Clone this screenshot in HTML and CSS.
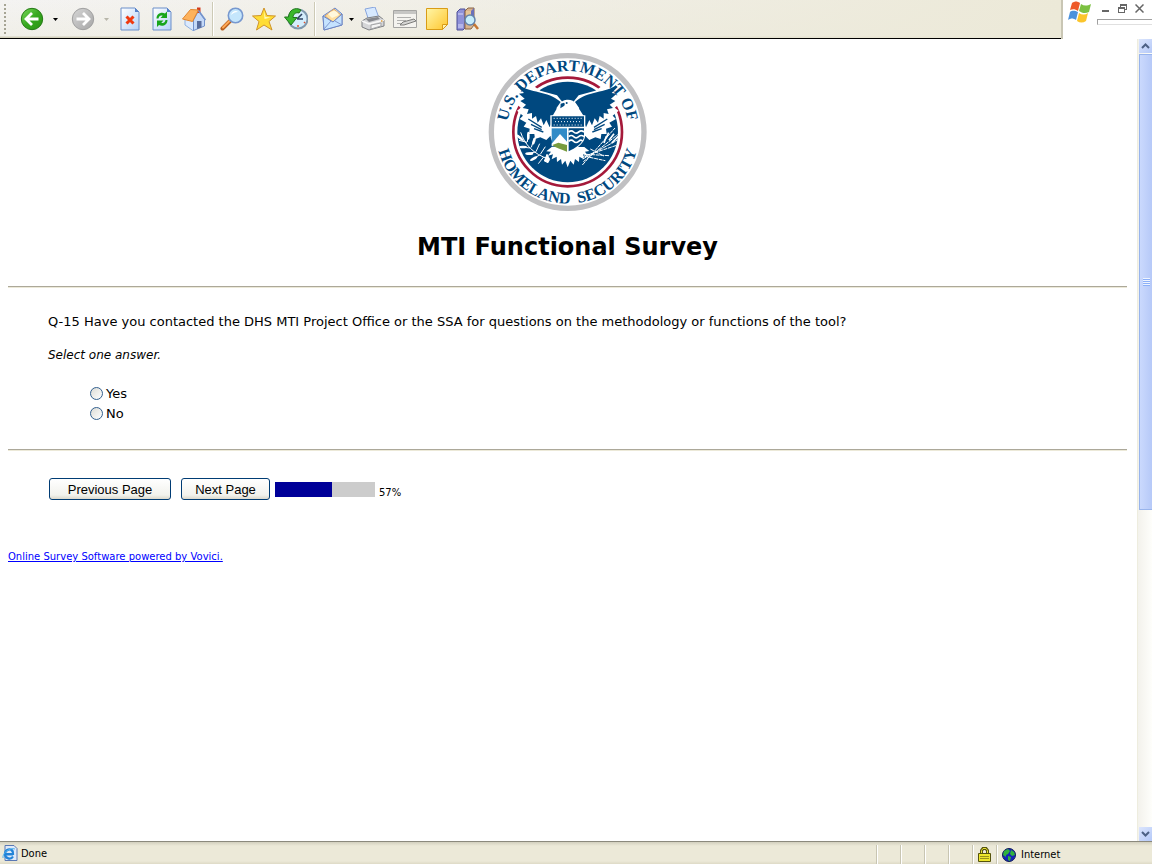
FILE: index.html
```html
<!DOCTYPE html>
<html lang="en">
<head>
  <meta charset="UTF-8">
  <meta name="viewport" content="width=device-width, initial-scale=1.0">
  <title>MTI Functional Survey</title>
  <link rel="stylesheet" href="styles.css">
</head>
<body>
  <header class="top">
    <div class="toolbar">
      <span class="grip"></span>
      <button class="tool" aria-label="Back">
        <svg width="24" height="24" viewBox="0 0 24 24">
          <defs>
            <linearGradient id="green" x1="0" y1="0" x2="1" y2="1"><stop offset="0" stop-color="#7ddb5e"/><stop offset=".5" stop-color="#36a81f"/><stop offset="1" stop-color="#2b9413"/></linearGradient>
            <linearGradient id="grey" x1="0" y1="0" x2="1" y2="1"><stop offset="0" stop-color="#d6d6d6"/><stop offset="1" stop-color="#a6a6a6"/></linearGradient>
            <linearGradient id="paper" x1="0" y1="0" x2="1" y2="1"><stop offset="0" stop-color="#ffffff"/><stop offset="1" stop-color="#b5d2f8"/></linearGradient>
            <linearGradient id="gold" x1="0" y1="0" x2="1" y2="1"><stop offset="0" stop-color="#fff6a8"/><stop offset="1" stop-color="#ffc62e"/></linearGradient>
          </defs>
          <circle cx="12" cy="12" r="10.7" fill="url(#green)" stroke="#267a17"/>
          <path d="M18.500 12H7M12 6l-6 6 6 6" fill="none" stroke="#fff" stroke-width="2.800"/>
        </svg>
      </button>
      <button class="drop" aria-label="Back history"><svg width="5" height="3" viewBox="0 0 5 3"><path d="M0 0h5L2.500 3z"/></svg></button>
      <button class="tool forward" aria-label="Forward">
        <svg width="24" height="24" viewBox="0 0 24 24">
          <circle cx="12" cy="12" r="10.700" fill="url(#grey)" stroke="#a0a0a0"/>
          <path d="M5.500 12H17M12 6l6 6-6 6" fill="none" stroke="#fff" stroke-width="2.800"/>
        </svg>
      </button>
      <button class="drop" aria-label="Forward history"><svg width="5" height="3" viewBox="0 0 5 3"><path d="M0 0h5L2.500 3z" fill="#b8b6aa"/></svg></button>
      <button class="tool" aria-label="Stop">
        <svg width="24" height="24" viewBox="0 0 24 24">
          <path d="M3 1h14l4 4v18H3z" fill="url(#paper)" stroke="#6c8fc9"/>
          <path d="M17 1v4h4z" fill="#5580c8"/>
          <path d="M8.500 9.500l7 7M15.500 9.500l-7 7" stroke="#f03a10" stroke-width="3"/>
        </svg>
      </button>
      <button class="tool" aria-label="Refresh">
        <svg width="24" height="24" viewBox="0 0 24 24">
          <path d="M3 1h14l4 4v18H3z" fill="url(#paper)" stroke="#6c8fc9"/>
          <path d="M17 1v4h4z" fill="#5580c8"/>
          <path d="M6.500 11.500c0-5 5-7 8.500-5l2-2v6.500h-6.500l2.200-2.200c-2-1-3.700.2-4.200 2.700zM17.500 13c0 5-5 7-8.500 5l-2 2v-6.500h6.500l-2.200 2.200c2 1 3.700-.2 4.200-2.700z" fill="#18a51b"/>
        </svg>
      </button>
      <button class="tool" aria-label="Home">
        <svg width="24" height="24" viewBox="0 0 24 24">
          <path d="M3 12v6l8.500 6V13z" fill="#dceafd" stroke="#8fb0e0"/>
          <path d="M11.500 23.500V13L16.500 4l6 8.500V19z" fill="#c4d9f8" stroke="#7292cc"/>
          <path d="M15 14h4.500v6.500L15 22z" fill="#586d9d"/>
          <path d="M15 .500h3.500V6H15z" fill="#d33a1c"/>
          <path d="M.500 12L8.500 2.500l8 .5-6 11.500z" fill="#fdb25c" stroke="#e08630"/>
          <path d="M16.500 3.500l7 9.500" stroke="#7292cc" stroke-width="1.500"/>
        </svg>
      </button>
      <span class="divider"></span>
      <button class="tool" aria-label="Search">
        <svg width="24" height="24" viewBox="0 0 24 24">
          <path d="M10 14l-7.500 7.500" stroke="#b85e1c" stroke-width="4" stroke-linecap="round"/>
          <path d="M9.500 14L3 20.500" stroke="#ffa955" stroke-width="2" stroke-linecap="round"/>
          <circle cx="15.500" cy="8.500" r="7.200" fill="#c5e6fc" stroke="#7798cf" stroke-width="1.600"/>
          <path d="M11 8c1-4 5-5 7-3-3 0-5 1-7 3z" fill="#fff"/>
        </svg>
      </button>
      <button class="tool" aria-label="Favorites">
        <svg width="24" height="24" viewBox="0 0 24 24">
          <path d="M12 1l3 7.500 8.500.5-6.500 5.500 3 8.500-8-5-7.500 5L7 14.500.500 9 9 8.500z" fill="#ffdd35" stroke="#cf942a" stroke-linejoin="round"/>
          <path d="M12 4l1.500 6 5 .5-6 1.500z" fill="#fffac0"/>
        </svg>
      </button>
      <button class="tool" aria-label="History">
        <svg width="24" height="24" viewBox="0 0 24 24">
          <circle cx="14" cy="12" r="9.500" fill="#d4edfc" stroke="#7f98ad" stroke-width="2"/>
          <path d="M13 12l5-5M13 12h6" stroke="#304463" stroke-width="1.600"/>
          <path d="M14 4v2M14 18v2M20 15l1 1" stroke="#e3532a" stroke-width="1.500"/>
          <path d="M17 3C11-.500 5 3 4.500 10H.500L7 18l6-7.500H9C9 7 12 5 15 6z" fill="#39b72c" stroke="#20751d"/>
        </svg>
      </button>
      <span class="divider"></span>
      <button class="tool mail" aria-label="Mail">
        <svg width="24" height="24" viewBox="0 0 24 24">
          <path d="M2 9L14 1l7 6v11L3 23z" fill="#bcdcfb" stroke="#6c85c3"/>
          <path d="M4 9l9-7 7 6-8 7z" fill="#ffe0a0" stroke="#e0a768"/>
          <path d="M7 7c3-3 6-4 9-2l2 3-7 3z" fill="#fff8dc"/>
          <path d="M2 9l10 6 9-8v11L3 23z" fill="#c5e3ff" stroke="#6c85c3"/>
          <path d="M3 22l7-8M21 18l-7-4" stroke="#8299cf" fill="none"/>
        </svg>
      </button>
      <button class="drop small" aria-label="Mail menu"><svg width="5" height="3" viewBox="0 0 5 3"><path d="M0 0h5L2.500 3z"/></svg></button>
      <button class="tool" aria-label="Print">
        <svg width="24" height="24" viewBox="0 0 24 24">
          <path d="M4 2l10-2 4 11-10 3z" fill="#d7e9ff" stroke="#88a5dd"/>
          <path d="M1 14l5-3 12-2 5 4v6L8 23l-7-3z" fill="#d5d6d8" stroke="#7e8084"/>
          <path d="M1 14l7 3 15-4" fill="none" stroke="#f8f8f8" stroke-width="1.500"/>
          <path d="M5 12l12-2 2 2-11 3z" fill="#85878d"/>
          <path d="M10 18l10-2v3l-10 3z" fill="#f4f4f4" stroke="#a3a4a6"/>
          <path d="M20 14h1.500" stroke="#e09b35" stroke-width="1.500"/>
        </svg>
      </button>
      <button class="tool" aria-label="Edit">
        <svg width="24" height="24" viewBox="0 0 24 24">
          <path d="M.500 3.500h23v17H.500z" fill="#f4f3ef" stroke="#a5a5a3"/>
          <path d="M1 4h22v3H1z" fill="#c6c6c4"/>
          <path d="M4 10.500h14M4 13.500h9M4 16.500h4" stroke="#b0b0ae"/>
          <path d="M7 18l3-3 11-3 2 2-12 4z" fill="#d6d6d4" stroke="#7c7c7a"/>
        </svg>
      </button>
      <button class="tool" aria-label="Note">
        <svg width="24" height="24" viewBox="0 0 24 24">
          <path d="M1.500 1.500h21v16l-5 5h-16z" fill="url(#gold)" stroke="#d99c16"/>
          <path d="M22.500 17.500h-5v5z" fill="#fff1b0" stroke="#d99c16"/>
        </svg>
      </button>
      <button class="tool research" aria-label="Research">
        <svg width="24" height="24" viewBox="0 0 24 24">
          <path d="M1 5l3-3h5v19l-2 2H1z" fill="#8f91d8" stroke="#4d4e96"/>
          <path d="M2 7h5M2 18h5M2 20h5" stroke="#d8d9fa"/>
          <path d="M9 4l3-3h6v17l-3 4H9z" fill="#d9b38c" stroke="#8a6544"/>
          <path d="M10 5h5M10 7h5" stroke="#f2d79c"/>
          <path d="M15 4l3-3v16h-3z" fill="#6b70ba"/>
          <path d="M18 17l4 5" stroke="#c57632" stroke-width="2.500"/>
          <circle cx="14" cy="13" r="5" fill="#c6edfb" stroke="#6483aa" stroke-width="1.500"/>
        </svg>
      </button>
    </div>
    <div class="window-corner">
      <svg class="flag" width="24" height="24" viewBox="0 0 24 24">
        <path d="M4 3c3-2 5-2 8 0l-2 8c-3-2-5-2-8-1z" fill="#ee5a2a"/>
        <path d="M13 4c3 2 6 2 10 0l-2 8c-4 2-7 1-10-1z" fill="#7cc142"/>
        <path d="M2 12c3-2 5-1 8 0l-2 8c-3-2-5-2-8 0z" fill="#4b91dc"/>
        <path d="M11 13c3 2 6 2 9 0l-2 8c-3 2-6 2-9 0z" fill="#fbc52c"/>
      </svg>
      <div class="window-side">
        <div class="window-buttons">
          <button aria-label="Minimize"><svg width="9" height="9" viewBox="0 0 9 9"><path d="M1 6h7v2H1z"/></svg></button>
          <button aria-label="Restore"><svg width="9" height="9" viewBox="0 0 9 9"><path d="M2 0h7v6H7V5h1V2H3v1H2zM0 3h7v6H0zM1 5v3h5V5z" fill-rule="evenodd"/></svg></button>
          <button aria-label="Close"><svg width="9" height="9" viewBox="0 0 9 9"><path d="M.500.500l8 8M8.500.500l-8 8" stroke="#666" stroke-width="1.500"/></svg></button>
        </div>
        <div class="clipped-field"></div>
      </div>
    </div>
  </header>

  <div class="view">
    <main class="page">
      <svg class="seal" width="160" height="160" viewBox="23 21 480 480" role="img" aria-label="U.S. Department of Homeland Security seal">
        <defs>
          <path id="arc-top" d="M79 261a183 183 0 0 1 366 0"/>
          <path id="arc-bottom" d="M46 221A216 216 0 1 0 478 221" transform="translate(0 40)"/>
          <path id="arc-low" d="M47 261a215 215 0 0 0 430 0"/>
        </defs>
        <circle cx="262" cy="261" r="229" fill="#fff" stroke="#c0c0c2" stroke-width="16"/>
        <circle cx="262" cy="261" r="163" fill="none" stroke="#a5193a" stroke-width="8"/>
        <circle cx="262" cy="261" r="151" fill="#00487f"/>
        <!-- wings -->
        <g id="wing">
          <path d="M108 112l48 8 24 17 50 14 28 35-16 88-32-1-12 12-18-8-16 5-2-15-16 0 2-16-18-6 8-12-20-11 10-10-18-15 12-9-20-15 13-7-15-18 17-1z" fill="#fff"/>
          <path d="M119 121c28 24 83 15 122 50l-13 19 14 14-20 12-14 31-10-22-8 16-8-21-10 13-5-20-12 8 0-17-15 3 5-14-18-4 10-10-17-11 13-7-17-15 15-2-18-18z" fill="#00487f"/>
          <path d="M152 238l32 16M144 222l40 25M161 251l28 10" stroke="#00487f" stroke-width="4"/>
        </g>
        <use href="#wing" transform="matrix(-1 0 0 1 525 0)"/>
        <!-- body, tail and talons -->
        <path d="M230 190l11-14c4-14 37-18 46 2l12 18 13 20-96-2z" fill="#fff"/>
        <path d="M241 176l-1 14 11-7c3-3 3-8 0-10z" fill="#00487f"/>
        <circle cx="259" cy="174" r="3" fill="#00487f"/>
        <path d="M214 306l-16 13 14 1-10 13 16-5-4 15 15-8 1 16 12-9 3 17 10-12 7 20 8-20 10 12 4-17 12 9 1-16 14 8-3-15 15 5-9-13 13-2-15-12z" fill="#fff"/>
        <path d="M210 211h105v56c0 31-29 43-53 60-24-17-52-29-52-60z" fill="#fff"/>
        <path d="M214 214h97v31h-97z" fill="#00487f"/>
        <path d="M220 220h88M224 230h80M220 240h88" stroke="#fff" stroke-width="3" stroke-dasharray="3 6"/>
        <path d="M214 250h46v50h-46z" fill="#318bc7"/>
        <path d="M214 296l25-29 21 23v14h-46z" fill="#fff"/>
        <path d="M216 300l18-7 26 7v20c-18-7-34-11-44-20z" fill="#779b3e"/>
        <path d="M265 250h46v20c0 27-28 39-46 49z" fill="#00487f"/>
        <path d="M265 261q8-7 15 0t15 0 16 0M265 275q8-7 15 0t15 0 16 0M265 289q8-7 15 0t15 0 12 0" fill="none" stroke="#fff" stroke-width="5"/>
        <!-- olive branch -->
        <g stroke="#fff" stroke-width="3" fill="#fff">
          <path d="M121 262c12 36 38 66 85 80M140 292l-24-6M151 309l-31-3M166 321l-30 5M178 330l-23 13M190 336l-16 20M141 291l3-25M153 307l9-28M167 320l11-24M180 328l15-23" fill="none"/>
          <path d="M203 353l-11-5 8-20 8 15z"/>
        </g>
        <g fill="#fff">
          <ellipse cx="119" cy="278" rx="4" ry="14" transform="rotate(-50 119 278)"/>
          <ellipse cx="144" cy="272" rx="4" ry="12"/>
          <ellipse cx="128" cy="306" rx="12" ry="4"/>
          <ellipse cx="161" cy="288" rx="4" ry="12" transform="rotate(17 161 288)"/>
          <ellipse cx="147" cy="326" rx="12" ry="4"/>
          <ellipse cx="160" cy="341" rx="12" ry="4" transform="rotate(-30 160 341)"/>
        </g>
        <!-- arrows -->
        <path d="M306 360l98-111M309 350l103-81M307 342l105-57M303 336l106-35M314 334l61 13M318 328l68 4M330 312l40 21" stroke="#fff" stroke-width="3" stroke-dasharray="12 2"/>
        <path d="M377 280l8-17M386 286l15-20M394 294l20-20M371 294l7-20" stroke="#fff" stroke-width="5"/>
        <g class="seal-text">
          <text><textPath href="#arc-top" startOffset="50%">U.S. DEPARTMENT OF</textPath></text>
          <text><textPath href="#arc-low" startOffset="50%">HOMELAND&nbsp; SECURITY</textPath></text>
        </g>
      </svg>
      <h1>MTI Functional Survey</h1>
      <hr>
      <form class="survey">
        <fieldset>
          <legend>Q-15 Have you contacted the DHS MTI Project Office or the SSA for questions on the methodology or functions of the tool?</legend>
          <p class="hint">Select one answer.</p>
          <div class="answers">
            <label><input type="radio" name="q15" value="yes">Yes</label>
            <label><input type="radio" name="q15" value="no">No</label>
          </div>
        </fieldset>
        <hr>
        <div class="actions">
          <button type="button" class="previous">Previous Page</button>
          <button type="button" class="next">Next Page</button>
          <div class="progress"><div class="progress-fill" style="width: 57%"></div></div>
          <span class="percent">57%</span>
        </div>
      </form>
      <a class="powered" href="#">Online Survey Software powered by Vovici.</a>
    </main>
    <div class="scrollbar">
      <button aria-label="Scroll up"><svg width="9" height="6" viewBox="0 0 9 6"><path d="M1 5l3.500-3.500L8 5" fill="none" stroke="#4d6185" stroke-width="2"/></svg></button>
      <div class="track">
        <div class="thumb"><span class="thumb-grip"></span></div>
      </div>
      <button aria-label="Scroll down"><svg width="9" height="6" viewBox="0 0 9 6"><path d="M1 1l3.500 3.500L8 1" fill="none" stroke="#4d6185" stroke-width="2"/></svg></button>
    </div>
  </div>

  <footer class="status">
    <div class="status-text">
      <svg width="16" height="16" viewBox="0 0 16 16">
        <path d="M3 .500h9l3 3v12H3z" fill="#dfe9f8" stroke="#5a78b4"/>
        <path d="M11 9.500H4M10.500 6.500C9 3 3 4 3 9s6 6 8 2.500M4 9h7c0-2 0-3-1-4" fill="none" stroke="#2183d8" stroke-width="2.200"/>
        <path d="M1 13C0 8 8 2 13 4" fill="none" stroke="#54b4ee"/>
      </svg>
      <span>Done</span>
    </div>
    <div class="cell"></div>
    <div class="cell"></div>
    <div class="cell"></div>
    <div class="cell"></div>
    <div class="cell lock">
      <svg width="13" height="15" viewBox="0 0 13 15">
        <path d="M3.500 7V3.500l1.500-2h3l1.500 2V7" fill="none" stroke="#55520c" stroke-width="3"/>
        <path d="M3.500 7V3.500l1.500-2h3l1.500 2V7" fill="none" stroke="#e8e23a"/>
        <path d="M.500 6.500h12v8H.500z" fill="#ede62c" stroke="#55520c"/>
        <path d="M2 9.500h9M2 11.500h9" stroke="#99921a"/>
      </svg>
    </div>
    <div class="cell zone">
      <svg width="14" height="14" viewBox="0 0 14 14">
        <circle cx="7" cy="7" r="6.500" fill="#1726b8" stroke="#101b56"/>
        <path d="M2 3l4-2 2 2-2 3-2 1v2L1 7zM9 2l3 2 1 3-3 1-2-2zM6 8l3 1-1 4-2-1z" fill="#31b33c"/>
      </svg>
      <span>Internet</span>
    </div>
  </footer>
</body>
</html>
```
FILE: styles.css
```css
* {
  box-sizing: border-box;
}

body {
  margin: 0;
  height: 100vh;
  display: flex;
  flex-direction: column;
  font-family: "DejaVu Sans", Verdana, sans-serif;
  font-size: 13px;
  color: #000;
  background: #fff;
}

button {
  padding: 0;
  border: none;
  background: none;
  font-family: inherit;
}

svg {
  display: block;
  flex: none;
}

/* browser toolbar */
.top {
  display: flex;
  flex: none;
  height: 39px;
}

.toolbar {
  flex: 1;
  display: flex;
  align-items: center;
  padding-left: 4px;
  border-bottom: 1px solid #000;
  background: linear-gradient(to right, rgba(236, 233, 216, 0), #ece9d8), linear-gradient(#f4f3f2, #f0efe8 36px, #d2cfba 37px);
}

.grip {
  width: 2px;
  height: 30px;
  margin-right: 10px;
  background: repeating-linear-gradient(#a6a494 0, #a6a494 2px, transparent 2px, transparent 4px);
}

.tool {
  display: flex;
  justify-content: center;
  width: 32px;
}

.forward {
  margin-left: 4px;
}

.drop {
  display: flex;
  justify-content: center;
  width: 15px;
}

.mail {
  width: 30px;
}

.small {
  width: 6px;
  margin-right: 3px;
}

.research {
  width: 30px;
}

.divider {
  width: 2px;
  height: 34px;
  margin: 0 2px;
  border-left: 1px solid #cdcab6;
  border-right: 1px solid #fff;
}

.window-corner {
  display: flex;
  width: 91px;
  padding-left: 5px;
  border-left: 2px solid #c9c6b4;
}

.window-side {
  flex: 1;
  padding-left: 5px;
}

.window-buttons {
  display: flex;
  gap: 8px;
  height: 19px;
  padding: 4px 0 0 4px;
}

.window-buttons svg {
  fill: #666;
}

.window-buttons button {
  display: flex;
  height: 9px;
}

.clipped-field {
  height: 6px;
  border: 1px solid #a0a0a0;
  border-right: none;
  border-bottom-color: #e0e0e0;
}

/* page area */
.view {
  flex: 1;
  display: flex;
  min-height: 0;
}

.page {
  flex: 1;
  padding: 13px 10px 0 8px;
  overflow: hidden;
}

.seal {
  margin: 0 auto;
}

.seal-text {
  font-family: "Liberation Serif", serif;
  font-size: 48px;
  font-weight: bold;
  fill: #00487f;
  text-anchor: middle;
}

h1 {
  margin: 19px 0 23px;
  font-size: 24px;
  line-height: 32px;
  text-align: center;
}

hr {
  margin: 0;
  border: none;
  border-top: 1px solid #aca899;
  border-bottom: 1px solid #ece9d8;
}

fieldset {
  margin: 0;
  padding: 26px 40px;
  border: none;
}

legend {
  float: left;
  width: 100%;
  padding: 0;
  line-height: 16px;
}

.hint {
  clear: both;
  margin: 0;
  padding-top: 17px;
  font-size: 12px;
  line-height: 16px;
  font-style: italic;
}

.answers {
  margin: 20px 0 0 42px;
}

.answers label {
  display: flex;
  align-items: center;
  gap: 3px;
  width: 60px;
  height: 20px;
}

.answers input {
  appearance: none;
  width: 13px;
  height: 13px;
  margin: 0;
  border: 1px solid #33608f;
  border-radius: 50%;
  background: linear-gradient(135deg, #dcdcd6, #fff);
}

.answers input:checked {
  background: radial-gradient(#21a121 3px, #fff 4px);
}

.actions {
  display: flex;
  align-items: center;
  padding: 27px 0 0 41px;
}

.actions button {
  height: 22px;
  border: 1px solid #003c74;
  border-radius: 3px;
  background: linear-gradient(#fff, #f2f2ed 80%, #dcd8cc);
  font-family: "Liberation Sans", Arial, sans-serif;
  font-size: 13px;
  color: #000;
}

.actions .previous {
  width: 122px;
  margin-right: 10px;
}

.actions .next {
  width: 89px;
  margin-right: 5px;
}

.progress {
  width: 100px;
  height: 15px;
  background: #ccc;
}

.progress-fill {
  height: 100%;
  background: #009;
}

.percent {
  margin: 8px 0 0 4px;
  font-size: 10px;
  line-height: 14px;
}

.powered {
  display: inline-block;
  margin-top: 50px;
  font-size: 10px;
  line-height: 14px;
  color: #00f;
}

/* scrollbar */
.scrollbar {
  display: flex;
  flex-direction: column;
  width: 15px;
  border-left: 1px solid #eeeddf;
  padding-left: 1px;
  background: linear-gradient(to right, #f3f2ec, #fefefb);
}

.scrollbar button {
  display: flex;
  flex: none;
  align-items: center;
  justify-content: center;
  height: 14px;
  background: linear-gradient(135deg, #dbe5fd, #b5c9f8);
}

.track {
  flex: 1;
  padding-top: 1px;
}

.thumb {
  display: flex;
  align-items: center;
  justify-content: center;
  height: 59%;
  border: 1px solid #98b4ec;
  border-right: none;
  background: linear-gradient(to right, #cad9fd, #b6c9f8);
}

.thumb-grip {
  width: 7px;
  height: 8px;
  background: repeating-linear-gradient(#eef4fe 0, #eef4fe 1px, #8cb0f8 1px, #8cb0f8 2px);
}

/* status bar */
.status {
  display: flex;
  flex: none;
  height: 23px;
  border-top: 1px solid #8b897d;
  background: linear-gradient(#d2cfbe, #ece9d8 4px, #ece9d8 19px, #dedac6);
  font-family: "DejaVu Sans Condensed", Tahoma, sans-serif;
  font-size: 11px;
}

.status-text {
  flex: 1;
  display: flex;
  align-items: center;
  gap: 3px;
  padding-left: 2px;
}

.cell {
  width: 24px;
  margin-top: 3px;
  border-left: 1px solid #c8c5b2;
  box-shadow: inset 1px 0 #fff;
}

.lock {
  display: flex;
  align-items: center;
  justify-content: center;
}

.zone {
  display: flex;
  align-items: center;
  gap: 5px;
  width: 156px;
  padding-left: 5px;
}
```
